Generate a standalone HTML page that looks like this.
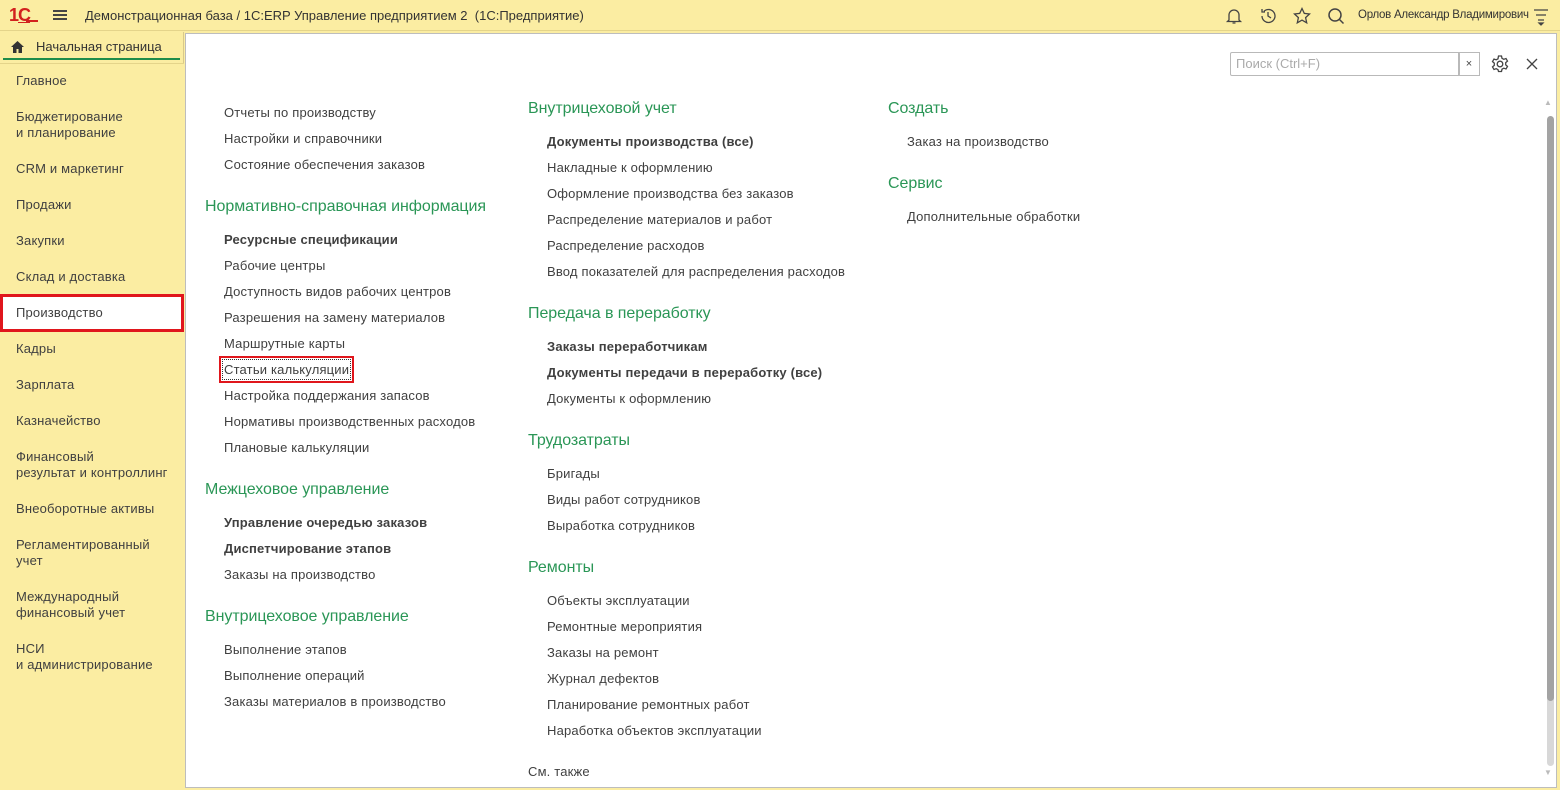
<!DOCTYPE html>
<html><head><meta charset="utf-8"><style>
*{margin:0;padding:0;box-sizing:border-box}
body{width:1560px;height:790px;overflow:hidden;background:#fbeda2;font-family:"Liberation Sans",Arial,sans-serif;color:#404040;position:relative}
.a{position:absolute;white-space:nowrap}
.t{font-size:13px;line-height:16px;letter-spacing:.18px;margin-top:1px}
.b{font-weight:bold}
.h{font-size:16px;line-height:20px;color:#2a9656;letter-spacing:-.05px;margin-top:1px}
#top{position:absolute;left:0;top:0;width:1560px;height:31px;background:#fbeda2;border-bottom:1px solid #e4d48a}
#side{position:absolute;left:0;top:32px;width:184px;height:758px;background:#fbeda2;border-right:1px solid #d9c98a}
#main{position:absolute;left:185px;top:33px;width:1372px;height:755px;background:#fff;border:1px solid #bdbdbd}
</style></head><body>
<div id="top">
 <div class="a" style="left:9px;top:5px;font-size:18px;font-weight:bold;color:#d2211e;letter-spacing:-1px">1<span style="text-decoration:underline">С</span></div>
 <div class="a" style="left:26px;top:20px;width:12px;height:2px;background:#d2211e"></div>
 <div class="a" style="left:53px;top:10px;width:14px;height:2px;background:#444;box-shadow:0 4px 0 #444,0 8px 0 #444"></div>
 <div class="a" style="left:85px;top:8px;font-size:13px;line-height:16px;color:#333">Демонстрационная база / 1С:ERP Управление предприятием 2&nbsp; (1С:Предприятие)</div>
 <svg class="a" style="left:1224px;top:6px" width="20" height="20" viewBox="0 0 20 20" fill="none" stroke="#444" stroke-width="1.3"><path d="M5 14V9a5 5 0 0 1 10 0v5l1.5 1.5h-13z M8.5 17h3"/></svg>
 <svg class="a" style="left:1258px;top:6px" width="20" height="20" viewBox="0 0 20 20" fill="none" stroke="#444" stroke-width="1.3"><path d="M4 10a6.5 6.5 0 1 0 2-4.7M4 3v3h3M10 6v4l3 2"/></svg>
 <svg class="a" style="left:1292px;top:6px" width="20" height="20" viewBox="0 0 20 20" fill="none" stroke="#444" stroke-width="1.3"><path d="M10 2.5l2.3 4.9 5.2.6-3.9 3.6 1.1 5.2L10 14.1l-4.7 2.7 1.1-5.2L2.5 8l5.2-.6z"/></svg>
 <svg class="a" style="left:1326px;top:6px" width="20" height="20" viewBox="0 0 20 20" fill="none" stroke="#444" stroke-width="1.5"><circle cx="9" cy="9" r="6"/><path d="M13.5 13.5l4 4"/></svg>
 <div class="a" style="left:1358px;top:9px;font-size:11.5px;letter-spacing:-.25px;color:#333">Орлов Александр Владимирович</div>
 <svg class="a" style="left:1532px;top:6px" width="18" height="20" viewBox="0 0 18 20" fill="none" stroke="#444" stroke-width="1.3"><path d="M2 4h14M4 9h10M6 14h6"/><path d="M7 17h4l-2 2z" fill="#444"/></svg>
</div>
<div id="side">
 <svg class="a" style="left:10px;top:8px" width="15" height="14" viewBox="0 0 15 14"><path d="M7.5 1L1 7h2v6h3.5V9h2v4H12V7h2z" fill="#333"/></svg>
 <div class="a" style="left:36px;top:7px;font-size:13px;color:#333">Начальная страница</div>
 <div class="a" style="left:3px;top:26px;width:177px;height:2px;background:#1e8c4a"></div>
 <div class="a" style="left:0;top:31px;width:184px;height:727px;background:#fbeda2;border-top:1px solid #e4d48a"></div>
</div>
<div class="a t" style="left:16px;top:72px">Главное</div>
<div class="a t" style="left:16px;top:108px">Бюджетирование<br>и планирование</div>
<div class="a t" style="left:16px;top:160px">CRM и маркетинг</div>
<div class="a t" style="left:16px;top:196px">Продажи</div>
<div class="a t" style="left:16px;top:232px">Закупки</div>
<div class="a t" style="left:16px;top:268px">Склад и доставка</div>
<div class="a" style="left:0;top:294px;width:184px;height:38px;background:#fff;border:3px solid #e0161c"></div>
<div class="a t" style="left:16px;top:304px">Производство</div>
<div class="a t" style="left:16px;top:340px">Кадры</div>
<div class="a t" style="left:16px;top:376px">Зарплата</div>
<div class="a t" style="left:16px;top:412px">Казначейство</div>
<div class="a t" style="left:16px;top:448px">Финансовый<br>результат и контроллинг</div>
<div class="a t" style="left:16px;top:500px">Внеоборотные активы</div>
<div class="a t" style="left:16px;top:536px">Регламентированный<br>учет</div>
<div class="a t" style="left:16px;top:588px">Международный<br>финансовый учет</div>
<div class="a t" style="left:16px;top:640px">НСИ<br>и администрирование</div>
<div id="main">
 <div class="a" style="left:1044px;top:18px;width:230px;height:24px;border:1px solid #b9b9b9;border-radius:2px;background:#fff"></div>
 <div class="a" style="left:1050px;top:22px;font-size:13px;color:#aaa">Поиск (Ctrl+F)</div>
 <div class="a" style="left:1272px;top:18px;width:22px;height:24px;border:1px solid #b9b9b9;font-size:11px;text-align:center;line-height:22px;color:#444">×</div>
 <svg class="a" style="left:1304px;top:20px" width="20" height="20" viewBox="0 0 20 20" fill="none" stroke="#444" stroke-width="1.3"><circle cx="10" cy="10" r="2.8"/><path d="M8.5 2h3l.5 2.3 1.8 1 2.2-.8 1.5 2.6-1.8 1.6v2.1l1.8 1.6-1.5 2.6-2.2-.8-1.8 1-.5 2.3h-3L8 15.7l-1.8-1-2.2.8-1.5-2.6 1.8-1.6V9.2L2.5 7.6 4 5l2.2.8 1.8-1z"/></svg>
 <svg class="a" style="left:1339px;top:23px" width="14" height="14" viewBox="0 0 14 14" stroke="#444" stroke-width="1.3"><path d="M2 2l10 10M12 2L2 12"/></svg>
 <div class="a" style="left:1358px;top:64px;font-size:8px;color:#bbb">▲</div>
 <div class="a" style="left:1361px;top:660px;width:7px;height:72px;background:#d8d8d8;border-radius:4px"></div>
 <div class="a" style="left:1361px;top:82px;width:7px;height:585px;background:#a3a3a3;border-radius:4px"></div>
 <div class="a" style="left:1358px;top:734px;font-size:8px;color:#bbb">▼</div>
</div>
<div class="a t" style="left:224px;top:104px">Отчеты по производству</div>
<div class="a t" style="left:224px;top:130px">Настройки и справочники</div>
<div class="a t" style="left:224px;top:156px">Состояние обеспечения заказов</div>
<div class="a h" style="left:205px;top:196px">Нормативно-справочная информация</div>
<div class="a t b" style="left:224px;top:231px">Ресурсные спецификации</div>
<div class="a t" style="left:224px;top:257px">Рабочие центры</div>
<div class="a t" style="left:224px;top:283px">Доступность видов рабочих центров</div>
<div class="a t" style="left:224px;top:309px">Разрешения на замену материалов</div>
<div class="a t" style="left:224px;top:335px">Маршрутные карты</div>
<div class="a" style="left:219px;top:356px;width:135px;height:27px;border:2px solid #e0161c"></div>
<div class="a" style="left:222px;top:359px;width:129px;height:21px;border:1px dotted #333"></div>
<div class="a t" style="left:224px;top:361px">Статьи калькуляции</div>
<div class="a t" style="left:224px;top:387px">Настройка поддержания запасов</div>
<div class="a t" style="left:224px;top:413px">Нормативы производственных расходов</div>
<div class="a t" style="left:224px;top:439px">Плановые калькуляции</div>
<div class="a h" style="left:205px;top:479px">Межцеховое управление</div>
<div class="a t b" style="left:224px;top:514px">Управление очередью заказов</div>
<div class="a t b" style="left:224px;top:540px">Диспетчирование этапов</div>
<div class="a t" style="left:224px;top:566px">Заказы на производство</div>
<div class="a h" style="left:205px;top:606px">Внутрицеховое управление</div>
<div class="a t" style="left:224px;top:641px">Выполнение этапов</div>
<div class="a t" style="left:224px;top:667px">Выполнение операций</div>
<div class="a t" style="left:224px;top:693px">Заказы материалов в производство</div>

<div class="a h" style="left:528px;top:98px">Внутрицеховой учет</div>
<div class="a t b" style="left:547px;top:133px">Документы производства (все)</div>
<div class="a t" style="left:547px;top:159px">Накладные к оформлению</div>
<div class="a t" style="left:547px;top:185px">Оформление производства без заказов</div>
<div class="a t" style="left:547px;top:211px">Распределение материалов и работ</div>
<div class="a t" style="left:547px;top:237px">Распределение расходов</div>
<div class="a t" style="left:547px;top:263px">Ввод показателей для распределения расходов</div>
<div class="a h" style="left:528px;top:303px">Передача в переработку</div>
<div class="a t b" style="left:547px;top:338px">Заказы переработчикам</div>
<div class="a t b" style="left:547px;top:364px">Документы передачи в переработку (все)</div>
<div class="a t" style="left:547px;top:390px">Документы к оформлению</div>
<div class="a h" style="left:528px;top:430px">Трудозатраты</div>
<div class="a t" style="left:547px;top:465px">Бригады</div>
<div class="a t" style="left:547px;top:491px">Виды работ сотрудников</div>
<div class="a t" style="left:547px;top:517px">Выработка сотрудников</div>
<div class="a h" style="left:528px;top:557px">Ремонты</div>
<div class="a t" style="left:547px;top:592px">Объекты эксплуатации</div>
<div class="a t" style="left:547px;top:618px">Ремонтные мероприятия</div>
<div class="a t" style="left:547px;top:644px">Заказы на ремонт</div>
<div class="a t" style="left:547px;top:670px">Журнал дефектов</div>
<div class="a t" style="left:547px;top:696px">Планирование ремонтных работ</div>
<div class="a t" style="left:547px;top:722px">Наработка объектов эксплуатации</div>
<div class="a t" style="left:528px;top:763px">См. также</div>

<div class="a h" style="left:888px;top:98px">Создать</div>
<div class="a t" style="left:907px;top:133px">Заказ на производство</div>
<div class="a h" style="left:888px;top:173px">Сервис</div>
<div class="a t" style="left:907px;top:208px">Дополнительные обработки</div>
</body></html>
